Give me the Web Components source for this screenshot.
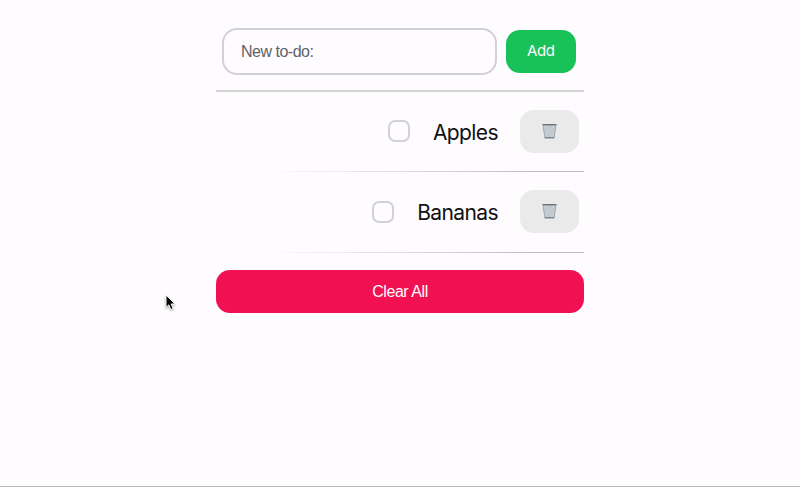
<!DOCTYPE html>
<html lang="en">
<head>
<meta charset="utf-8">
<title>To-do list</title>
<style>
html,body{margin:0;height:100%;overflow:hidden;background:#fefcff}
</style>
</head>
<body>
<todo-app></todo-app>
<script>
const define = (name, html) => customElements.define(name, class extends HTMLElement {
  constructor() {
    super();
    this.attachShadow({ mode: 'open' }).innerHTML = html;
  }
});

define('todo-button', `
<style>
:host{display:flex;align-items:center;justify-content:center;box-sizing:border-box;height:43.3px;border-radius:14px;background:var(--fill,#eaeaea);color:#fffafd;font:16px/20px "Liberation Sans",Arial,sans-serif;letter-spacing:-.45px}
</style>
<slot></slot>`);

define('trash-icon', `
<style>:host{display:block;width:15px;height:16px;margin-top:-1px}svg{display:block}</style>
<svg width="15" height="16" viewBox="0 0 16 17">
  <path d="M.8 1.5h14.4l-1.8 14.2q-.1.7-1 .7H3.6q-.9 0-1-.7z" fill="#cfd3d8"/>
  <path d="M2 4l10.5 11M4.5 2.5l8.5 9M8 2.5l5.5 5.5M2.5 8l7 7.5M14 4L3.5 15M11 2.5L3 11M8 2.5L2.5 8M13.5 8l-7 7.5" stroke="#b0b8c1" stroke-width=".7" fill="none"/>
  <path d="M1.3 3l1.8 12.7M14.7 3l-1.8 12.7" stroke="#99a2ad" stroke-width="1"/>
  <path d="M.5 1.8h15" stroke="#68727e" stroke-width="1.6"/>
  <path d="M3 15.7h10" stroke="#6c7a8b" stroke-width="1.3"/>
</svg>`);

define('todo-form', `
<style>
:host{display:flex;align-items:center;gap:9px;box-sizing:border-box;height:92px;padding:12px 8px 0 6px;border-bottom:2px solid #d4d4d5}
.field{box-sizing:border-box;width:275px;height:47px;border:2px solid #d1d0d3;border-radius:15px;padding:1px 17px 0;display:flex;align-items:center;color:#606266;font:16px/20px "Liberation Sans",Arial,sans-serif;letter-spacing:-.5px}
todo-button{width:70.5px;margin-top:1px;--fill:#19c159;font-family:Inter,sans-serif;font-size:15px;letter-spacing:-.3px}
</style>
<div class="field"><span>New to-do:</span></div>
<todo-button>Add</todo-button>`);

define('todo-item', `
<style>
:host{display:flex;align-items:center;justify-content:flex-end;box-sizing:border-box;height:80.5px;padding:0 5.5px 2px 0;
background:linear-gradient(to right,transparent 12%,#bebebe 85%) bottom/100% 1.4px no-repeat}
i{box-sizing:border-box;width:22px;height:22px;border:2px solid #d2d1d4;border-radius:7px}
span{margin:0 22px 0 23px;padding-top:3px;color:#111;font:21px/28px Inter,sans-serif;letter-spacing:-.6px}
todo-button{width:58.5px}
</style>
<i></i><span><slot></slot></span><todo-button><trash-icon></trash-icon></todo-button>`);

define('mouse-pointer', `
<style>:host{position:absolute;left:163px;top:293px;width:14px;height:20px;filter:drop-shadow(0 1px 1px #0005)}svg{display:block}</style>
<svg width="14" height="20" viewBox="0 0 14 20"><path d="M3 2v12.5l2.8-2.6 2 4.7 2.4-1-2-4.6H12z" fill="#080808" stroke="#fff" stroke-width="1"/></svg>`);

define('todo-app', `
<style>
:host{display:flex;flex-direction:column;align-items:center;position:relative;box-sizing:border-box;height:487px;border-bottom:1px solid #b7b7b7}
main{width:368px;display:flex;flex-direction:column}
.clear{margin-top:17px;--fill:#f11152}
</style>
<main>
<todo-form></todo-form>
<todo-item>Apples</todo-item>
<todo-item>Bananas</todo-item>
<todo-button class="clear">Clear All</todo-button>
</main>
<mouse-pointer></mouse-pointer>`);
</script>
</body>
</html>
